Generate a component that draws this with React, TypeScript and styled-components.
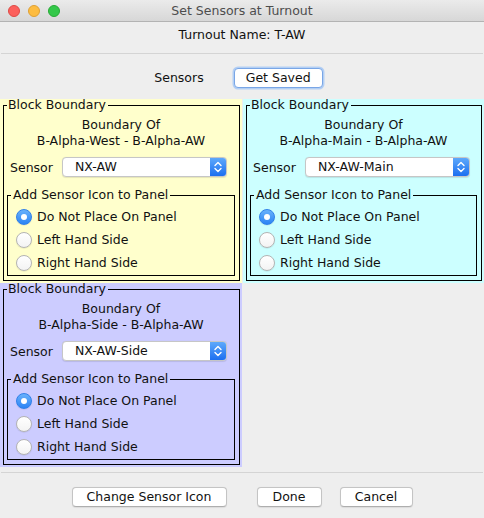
import styled, { createGlobalStyle } from "styled-components";

const GlobalStyle = createGlobalStyle`
  html, body {
    margin: 0;
    padding: 0;
    background: #eeeeee;
  }
  body {
    font-family: "DejaVu Sans", "Lucida Grande", sans-serif;
    font-size: 12.5px;
    color: #111;
  }
  * {
    box-sizing: border-box;
  }
`;

const Window = styled.div`
  width: 484px;
  height: 518px;
  display: flex;
  flex-direction: column;
  background: #eeeeee;
  overflow: hidden;
`;

const TitleBar = styled.div`
  height: 22px;
  display: grid;
  grid-template-columns: 1fr auto 1fr;
  align-items: center;
  background: linear-gradient(#ebebeb, #d7d7d7);
  border-bottom: 1px solid #b3b3b3;
`;

const Lights = styled.div`
  display: flex;
  gap: 8px;
  padding-left: 8px;
`;

const Light = styled.span<{ $fill: string; $edge: string }>`
  width: 12px;
  height: 12px;
  border-radius: 50%;
  background: ${(p) => p.$fill};
  border: 0.5px solid ${(p) => p.$edge};
`;

const Title = styled.div`
  font-size: 12.5px;
  color: #4d4d4d;
  line-height: 21px;
`;

const NameRow = styled.div`
  height: 31px;
  padding-top: 5px;
  line-height: 16px;
  text-align: center;
`;

const Separator = styled.div<{ $top?: number }>`
  height: 1px;
  margin: ${(p) => p.$top ?? 0}px 1px 0 1px;
  background: #d4d4d4;
`;

const SensorsRow = styled.div`
  height: 45px;
  padding: 14px 7px 0 0;
  display: flex;
  justify-content: center;
  align-items: flex-start;
  gap: 30px;
`;

const RowLabel = styled.span`
  line-height: 20px;
`;

const Button = styled.button<{ $width: number; $focused?: boolean }>`
  width: ${(p) => p.$width}px;
  height: 20px;
  padding: 0;
  font: inherit;
  color: #111;
  background: #ffffff;
  border: 1px solid ${(p) => (p.$focused ? "#79a6e6" : "#c4c4c4")};
  border-bottom-color: ${(p) => (p.$focused ? "#79a6e6" : "#aeaeae")};
  border-radius: 4px;
  box-shadow: ${(p) =>
    p.$focused ? "0 0 0 1.5px #b3cff4" : "0 0.5px 1px rgba(0,0,0,0.08)"};
  line-height: 18px;
`;

const PanelGrid = styled.div`
  display: grid;
  grid-template-columns: 242px 241px;
  column-gap: 1px;
`;

const Panel = styled.div<{ $tint: string }>`
  background: ${(p) => p.$tint};
  padding: 0 2px 2px 3px;
`;

const TitledBox = styled.fieldset<{ $inner?: boolean }>`
  margin: ${(p) => (p.$inner ? "12px 0 0 0" : "0")};
  padding: ${(p) => (p.$inner ? "4px 4px 1px 3px" : "0 4px 4px 3px")};
  border: 1px solid #000;
  min-width: 0;
`;

const Legend = styled.legend<{ $lead: number }>`
  padding: 0 2px 0 ${(p) => p.$lead}px;
  line-height: 12px;
  font-size: 12.5px;
`;

const BoundaryText = styled.div`
  margin-top: 6px;
  line-height: 16px;
  text-align: center;
`;

const SensorRow = styled.div`
  margin-top: 8px;
  padding-left: 3px;
  display: flex;
  align-items: center;
  height: 20px;
`;

const SensorLabel = styled.span`
  width: 52px;
  flex: none;
`;

const SelectBox = styled.div`
  width: 165px;
  height: 20px;
  display: flex;
  background: #ffffff;
  border: 1px solid #c6c6c6;
  border-radius: 4px;
  box-shadow: 0 0.5px 1px rgba(0, 0, 0, 0.1);
  overflow: hidden;
`;

const SelectText = styled.span`
  flex: 1;
  padding-left: 12px;
  line-height: 18px;
`;

const Stepper = styled.span`
  width: 16px;
  display: flex;
  align-items: center;
  justify-content: center;
  background: linear-gradient(#5ea9fb, #1c6ff0);
`;

const RadioList = styled.div`
  display: flex;
  flex-direction: column;
`;

const RadioRow = styled.label`
  height: 23px;
  padding-left: 5px;
  display: flex;
  align-items: center;
  gap: 5px;
`;

const RadioCircle = styled.span<{ $checked?: boolean }>`
  width: 16px;
  height: 16px;
  flex: none;
  border-radius: 50%;
  display: inline-flex;
  align-items: center;
  justify-content: center;
  border: 1px solid ${(p) => (p.$checked ? "#2f80ea" : "#b4b4b4")};
  background: ${(p) =>
    p.$checked
      ? "linear-gradient(#6ab2fb, #2b84f5)"
      : "linear-gradient(#ffffff, #f3f3f3)"};
  box-shadow: 0 0.5px 1px rgba(0, 0, 0, 0.12);

  &::after {
    content: "";
    width: 6px;
    height: 6px;
    border-radius: 50%;
    background: #ffffff;
    display: ${(p) => (p.$checked ? "block" : "none")};
  }
`;

const ButtonBar = styled.div`
  padding-top: 14px;
  display: flex;
  justify-content: center;
  gap: 30px;
`;

const ButtonGroup = styled.div`
  display: flex;
  gap: 18px;
`;

const boundaries = [
  { tint: "#ffffcc", from: "B-Alpha-West", sensor: "NX-AW" },
  { tint: "#ccffff", from: "B-Alpha-Main", sensor: "NX-AW-Main" },
  { tint: "#ccccff", from: "B-Alpha-Side", sensor: "NX-AW-Side" },
];

const placements = ["Do Not Place On Panel", "Left Hand Side", "Right Hand Side"];

const StepperIcon = () => (
  <svg width="10" height="14" viewBox="0 0 10 14">
    <path
      d="M2 5.5 L5 2.5 L8 5.5 M2 8.5 L5 11.5 L8 8.5"
      fill="none"
      stroke="#fff"
      strokeWidth="1.4"
      strokeLinecap="round"
      strokeLinejoin="round"
    />
  </svg>
);

const BoundaryPanel = ({ tint, from, sensor }: { tint: string; from: string; sensor: string }) => (
  <Panel $tint={tint}>
    <TitledBox>
      <Legend $lead={1}>Block Boundary</Legend>
      <BoundaryText>
        Boundary Of
        <br />
        {from} - B-Alpha-AW
      </BoundaryText>
      <SensorRow>
        <SensorLabel>Sensor</SensorLabel>
        <SelectBox role="combobox">
          <SelectText>{sensor}</SelectText>
          <Stepper>
            <StepperIcon />
          </Stepper>
        </SelectBox>
      </SensorRow>
      <TitledBox $inner>
        <Legend $lead={2}>Add Sensor Icon to Panel</Legend>
        <RadioList>
          {placements.map((p, i) => (
            <RadioRow key={p}>
              <RadioCircle $checked={i === 0} />
              {p}
            </RadioRow>
          ))}
        </RadioList>
      </TitledBox>
    </TitledBox>
  </Panel>
);

export default function App() {
  return (
    <>
      <GlobalStyle />
      <Window>
        <TitleBar>
          <Lights>
            <Light $fill="#fc605c" $edge="#de4a45" />
            <Light $fill="#fdbc40" $edge="#dea034" />
            <Light $fill="#34c84a" $edge="#27aa35" />
          </Lights>
          <Title>Set Sensors at Turnout</Title>
          <span />
        </TitleBar>
        <NameRow>Turnout Name: T-AW</NameRow>
        <Separator />
        <SensorsRow>
          <RowLabel>Sensors</RowLabel>
          <Button $width={89} $focused>
            Get Saved
          </Button>
        </SensorsRow>
        <PanelGrid>
          {boundaries.map((b) => (
            <BoundaryPanel key={b.from} {...b} />
          ))}
        </PanelGrid>
        <Separator $top={5} />
        <ButtonBar>
          <Button $width={155}>Change Sensor Icon</Button>
          <ButtonGroup>
            <Button $width={65}>Done</Button>
            <Button $width={73}>Cancel</Button>
          </ButtonGroup>
        </ButtonBar>
      </Window>
    </>
  );
}
